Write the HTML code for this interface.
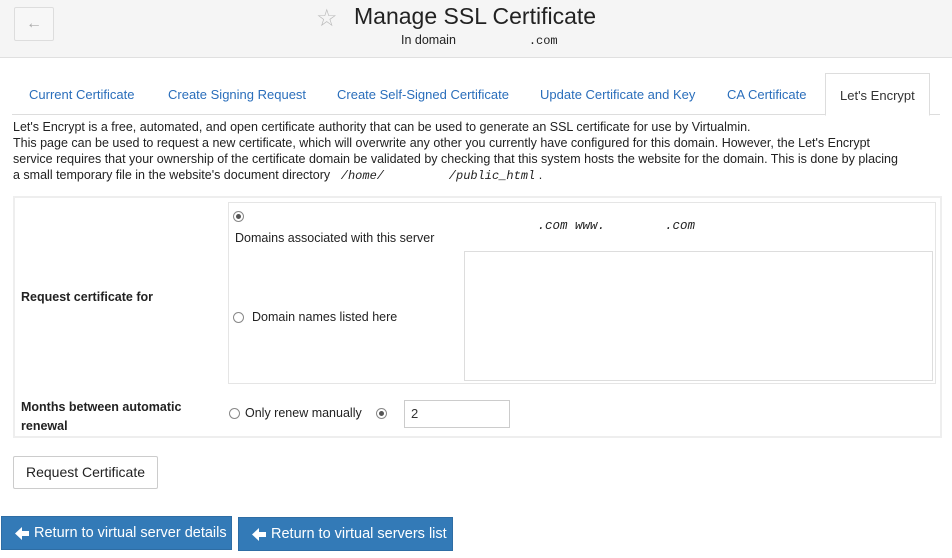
<!DOCTYPE html>
<html><head><meta charset="utf-8"><style>
*{box-sizing:border-box;margin:0;padding:0}
body{width:952px;height:558px;overflow:hidden;background:#fff;font-family:"Liberation Sans",sans-serif;font-size:13px;color:#333;position:relative}
.hdr{position:absolute;left:0;top:0;width:952px;height:58px;background:#f5f5f5;border-bottom:1px solid #e0e0e0}
.back{position:absolute;left:14px;top:7px;width:40px;height:34px;border:1px solid #ddd;border-radius:2px;background:#f7f7f7;color:#aaa;font-size:16px;text-align:center;line-height:32px}
.title{position:absolute;left:354px;top:3px;font-size:23px;color:#222}
.star{position:absolute;left:316px;top:4px;font-size:24px;color:#bbb}
.sub{position:absolute;left:401px;top:33px;font-size:12.5px;color:#222}
.mono{font-family:"Liberation Mono",monospace;font-size:12px}
.tabs{position:absolute;left:12px;top:73px;width:928px;height:42px;border-bottom:1px solid #ddd}
.tab{position:absolute;top:0;height:42px;line-height:43px;color:#2a6ebb;font-size:13px}
.tab.act{border:1px solid #ddd;border-bottom:1px solid #fff;background:#fff;color:#333;padding:0 14px;height:43px}
.p{position:absolute;left:13px;font-size:12.5px;color:#222;white-space:nowrap}
.box{position:absolute;left:13px;top:196px;width:929px;height:242px;border:2px solid #eee}
.inner{position:absolute;left:228px;top:202px;width:708px;height:182px;border:1px solid #e5e5e5}
.lbl{position:absolute;font-weight:bold;font-size:12.5px;color:#222}
.t{position:absolute;font-size:12.5px;color:#222}
.rad{position:absolute;width:11px;height:11px;border:1px solid #888;border-radius:50%;background:#fff}
.rad.on::after{content:"";position:absolute;left:2px;top:2px;width:5px;height:5px;border-radius:50%;background:#555}
.ta{position:absolute;left:464px;top:251px;width:469px;height:130px;border:1px solid #ddd}
.inp{position:absolute;left:404px;top:400px;width:106px;height:28px;border:1px solid #ccc;padding-left:6px;line-height:26px;font-size:13px}
.btn{position:absolute;left:13px;top:456px;width:145px;height:33px;border:1px solid #ccc;border-radius:2px;text-align:center;line-height:31px;font-size:14px;color:#222}
.blue{position:absolute;height:34px;background:#337ab7;border:1px solid #2e6da4;color:#fff;font-size:14.5px;line-height:32px;padding-left:32px}
.blue svg{position:absolute;left:13px;top:10px}
</style></head><body>
<div class="hdr">
<div class="back">&#8592;</div>
<div class="star">&#9734;</div>
<div class="title">Manage SSL Certificate</div>
<div class="sub">In domain &nbsp;&nbsp;&nbsp;&nbsp;&nbsp;&nbsp;&nbsp;&nbsp;&nbsp;&nbsp;&nbsp;&nbsp;&nbsp;&nbsp;&nbsp;&nbsp;&nbsp;&nbsp;&nbsp;&nbsp;<span class="mono">.com</span></div>
</div>
<div class="tabs">
<div class="tab" style="left:17px">Current Certificate</div>
<div class="tab" style="left:156px">Create Signing Request</div>
<div class="tab" style="left:325px">Create Self-Signed Certificate</div>
<div class="tab" style="left:528px">Update Certificate and Key</div>
<div class="tab" style="left:715px">CA Certificate</div>
<div class="tab act" style="left:813px;top:0">Let's Encrypt</div>
</div>
<div class="p" style="top:120px">Let's Encrypt is a free, automated, and open certificate authority that can be used to generate an SSL certificate for use by Virtualmin.</div>
<div class="p" style="top:136px">This page can be used to request a new certificate, which will overwrite any other you currently have configured for this domain. However, the Let's Encrypt</div>
<div class="p" style="top:152px">service requires that your ownership of the certificate domain be validated by checking that this system hosts the website for the domain. This is done by placing</div>
<div class="p" style="top:168px">a small temporary file in the website's document directory <span class="mono" style="font-style:italic">&nbsp;/home/&nbsp;&nbsp;&nbsp;&nbsp;&nbsp;&nbsp;&nbsp;&nbsp;&nbsp;/public_html</span> .</div>
<div class="box"></div>
<div class="inner"></div>
<div class="lbl" style="left:21px;top:290px">Request certificate for</div>
<div class="rad on" style="left:233px;top:211px"></div>
<div class="t" style="left:235px;top:231px">Domains associated with this server</div>
<div class="t mono" style="left:500px;top:219px;font-style:italic">&nbsp;&nbsp;&nbsp;&nbsp;&nbsp;.com www.&nbsp;&nbsp;&nbsp;&nbsp;&nbsp;&nbsp;&nbsp;&nbsp;.com</div>
<div class="rad" style="left:233px;top:312px"></div>
<div class="t" style="left:252px;top:310px">Domain names listed here</div>
<div class="ta"></div>
<div class="lbl" style="left:21px;top:398px;line-height:19px">Months between automatic<br>renewal</div>
<div class="rad" style="left:229px;top:408px"></div>
<div class="t" style="left:245px;top:406px">Only renew manually</div>
<div class="rad on" style="left:376px;top:408px"></div>
<div class="inp">2</div>
<div class="btn">Request Certificate</div>
<div class="blue" style="left:1px;top:516px;width:231px">
<svg width="14" height="13" viewBox="0 0 14 13"><path d="M7 0L0 6.5 7 13V9H14V4H7Z" fill="#fff"/></svg>Return to virtual server details</div>
<div class="blue" style="left:238px;top:517px;width:215px">
<svg width="14" height="13" viewBox="0 0 14 13"><path d="M7 0L0 6.5 7 13V9H14V4H7Z" fill="#fff"/></svg>Return to virtual servers list</div>
</body></html>
